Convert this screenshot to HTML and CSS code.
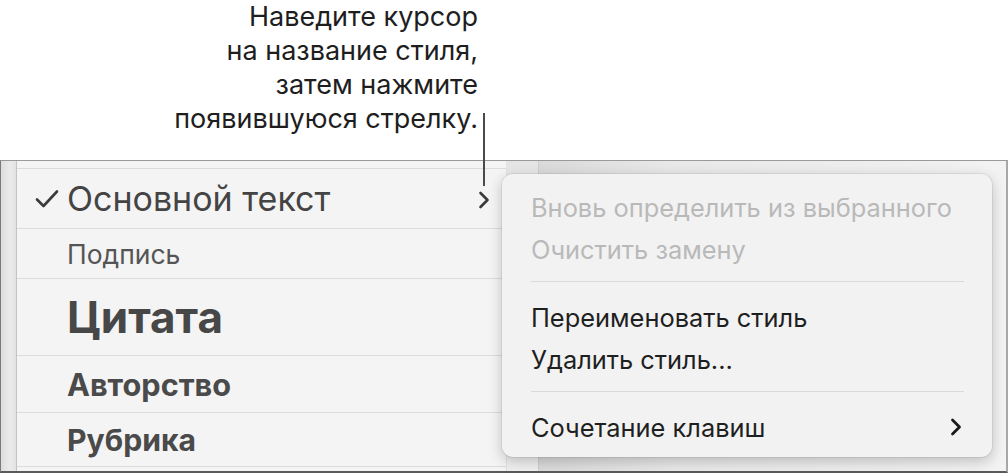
FILE: index.html
```html
<!DOCTYPE html>
<html lang="ru">
<head>
<meta charset="utf-8">
<link rel="stylesheet" href="styles.css">
</head>
<body>
<div class="page">
  <div class="callout">
    <p class="callout-text">Наведите курсор<br>на название стиля,<br>затем нажмите<br>появившуюся стрелку.</p>
  </div>
  <div class="stage">
    <div class="strip"></div>
    <div class="list">
      <div class="row row-body">
        <svg class="check" width="24" height="20" viewBox="0 0 24 20"><path d="M2 10.5 L8.5 17 L22 2.5" fill="none" stroke="#3a3a3a" stroke-width="2.6" stroke-linecap="round" stroke-linejoin="round"/></svg>
        <span class="name">Основной текст</span>
        <svg class="row-chev" width="12" height="18" viewBox="0 0 12 18"><path d="M2.5 2 L9.5 9 L2.5 16" fill="none" stroke="#3a3a3a" stroke-width="2.6" stroke-linecap="round" stroke-linejoin="round"/></svg>
      </div>
      <div class="row row-caption"><span class="name">Подпись</span></div>
      <div class="row row-quote"><span class="name">Цитата</span></div>
      <div class="row row-author"><span class="name">Авторство</span></div>
      <div class="row row-rubric"><span class="name">Рубрика</span></div>
    </div>
    <div class="column"></div>
    <div class="canvas"></div>
    <div class="leader"></div>
    <div class="menu">
      <div class="item disabled">Вновь определить из выбранного</div>
      <div class="item disabled">Очистить замену</div>
      <div class="sep"></div>
      <div class="item">Переименовать стиль</div>
      <div class="item">Удалить стиль...</div>
      <div class="sep"></div>
      <div class="item item-sub">
        <span>Сочетание клавиш</span>
        <svg class="menu-chev" width="12" height="18" viewBox="0 0 12 18"><path d="M2.5 2 L9.5 9 L2.5 16" fill="none" stroke="#1a1a1a" stroke-width="2.8" stroke-linecap="round" stroke-linejoin="round"/></svg>
      </div>
    </div>
  </div>
</div>
</body>
</html>
```

FILE: styles.css
```css
* { box-sizing: border-box; }
html, body { margin: 0; padding: 0; background: #ffffff; }
body {
  font-family: "Inter", "Noto Sans", "Liberation Sans", sans-serif;
  color: #1c1c1c;
  width: 1008px;
  height: 473px;
  overflow: hidden;
}
.page { position: relative; width: 1008px; height: 473px; }

.callout { height: 160px; display: flex; justify-content: flex-end; padding-right: 530px; }
.callout-text {
  margin: 0;
  padding-top: 0;
  text-align: right;
  font-size: 27px;
  line-height: 34px;
  color: #1e1e1e;
}

.stage {
  position: relative;
  height: 313px;
  display: flex;
  border-top: 1px solid #9a9a9a;
  border-left: 1px solid #7a7a7a;
  border-right: 2px solid #a8a8a8;
  border-bottom: 2px solid #5a5a5a;
}
.strip {
  width: 16px;
  background: linear-gradient(to right, #dedede, #ebebeb 60%, #e2e2e2);
  border-right: 1px solid #c4c4c4;
}
.list {
  width: 490px;
  background: #f4f4f4;
  padding-top: 7px;
  border-right: 1px solid #e2e2e2;
}
.row {
  display: flex;
  align-items: center;
  border-top: 1px solid #dcdcdc;
  padding-left: 50px;
  color: #474747;
  position: relative;
}
.row-body { height: 60px; padding-left: 18px; }
.row-body .name { font-size: 34px; margin-left: 8px; color: #444; }
.check { flex: none; }
.row-chev { position: absolute; left: 461px; top: 22px; }
.row-caption { height: 50px; }
.row-caption .name { font-size: 26.5px; color: #555; }
.row-quote { height: 77px; }
.row-quote .name { font-size: 44px; font-weight: 700; color: #474747; }
.row-author { height: 57px; }
.row-author .name { font-size: 30.7px; font-weight: 700; color: #4a4a4a; }
.row-rubric { height: 55px; border-bottom: 1px solid #dcdcdc; }
.row-rubric .name { font-size: 30.2px; font-weight: 700; color: #4a4a4a; }

.column {
  width: 32px;
  background: linear-gradient(to bottom, #e4e4e4, #ececec 10%, #efefef);
  border-right: 1px solid #d0d0d0;
}
.canvas {
  flex: 1;
  background: linear-gradient(to right, #dadada, #e9e9e9 30%, #efefef 80%, #f3f3f3);
}

.leader {
  position: absolute;
  left: 482px;
  top: -48px;
  width: 2px;
  height: 73px;
  background: #4a4a4a;
}

.menu {
  position: absolute;
  left: 501px;
  top: 13px;
  width: 490px;
  height: 283px;
  background: #f2f2f2;
  border-radius: 11px;
  box-shadow: 0 0 0 1px rgba(0,0,0,0.06), 0 4px 14px rgba(0,0,0,0.22);
  padding: 12px 28px 8px 29px;
  font-size: 25.4px;
  color: #1f1f1f;
}
.item { height: 42px; display: flex; align-items: center; justify-content: space-between; }
.item.disabled { color: #b9b9b9; }
.sep { height: 1px; background: #dadada; margin: 11px 0 14px; }
.menu-chev { margin-right: 2px; }
```
